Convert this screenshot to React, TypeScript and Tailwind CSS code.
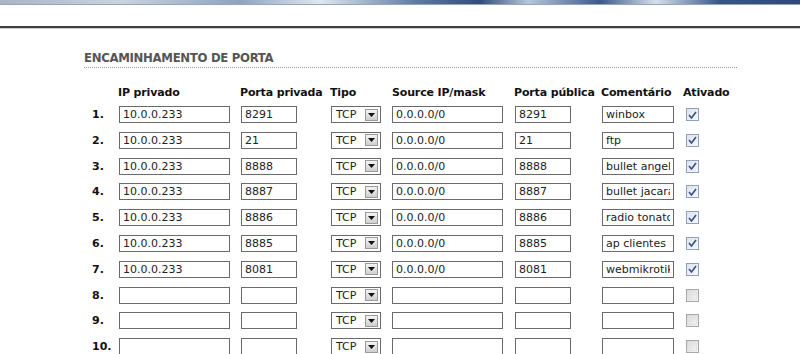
import React from "react";

const rows = [
  ["10.0.0.233", "8291", "0.0.0.0/0", "8291", "winbox", true],
  ["10.0.0.233", "21", "0.0.0.0/0", "21", "ftp", true],
  ["10.0.0.233", "8888", "0.0.0.0/0", "8888", "bullet angelim", true],
  ["10.0.0.233", "8887", "0.0.0.0/0", "8887", "bullet jacarai", true],
  ["10.0.0.233", "8886", "0.0.0.0/0", "8886", "radio tonatoa", true],
  ["10.0.0.233", "8885", "0.0.0.0/0", "8885", "ap clientes", true],
  ["10.0.0.233", "8081", "0.0.0.0/0", "8081", "webmikrotik", true],
  ["", "", "", "", "", false],
  ["", "", "", "", "", false],
  ["", "", "", "", "", false],
] as const;

const font = { fontFamily: '"DejaVu Sans", Verdana, sans-serif' };

function Field({ value, w }: { value: string; w: string }) {
  return (
    <input
      readOnly
      defaultValue={value}
      style={font}
      className={`${w} h-[17px] border border-[#6a6a6a] bg-white px-[3px] text-[11px] leading-[15px] text-[#222] outline-none`}
    />
  );
}

function Select() {
  return (
    <div className="flex h-[17px] w-[50px] items-center justify-between border border-[#6a6a6a] bg-white pl-[4px] pr-[2px]">
      <span style={font} className="text-[11px] leading-[13px] text-[#222]">
        TCP
      </span>
      <div className="flex h-[12px] w-[13px] items-center justify-center border border-[#9a9a9a] bg-gradient-to-b from-[#f4f4f4] to-[#cfcfcf]">
        <svg width="7" height="4" viewBox="0 0 7 4">
          <path d="M0 0h7L3.5 4z" fill="#111" />
        </svg>
      </div>
    </div>
  );
}

function Check({ on }: { on: boolean }) {
  return on ? (
    <div className="flex h-[13px] w-[13px] items-center justify-center border border-[#8ea2bf] bg-gradient-to-br from-[#dde3ee] to-[#f7f8fb]">
      <svg width="9" height="8" viewBox="0 0 9 8">
        <path d="M1 4l2.5 3L8 1" stroke="#3a4f8c" strokeWidth="1.6" fill="none" />
      </svg>
    </div>
  ) : (
    <div className="h-[13px] w-[13px] border border-[#a8a8a8] bg-gradient-to-br from-[#d6d6d6] to-[#f8f8f8] p-[1px]">
      <div className="h-full w-full border border-[#e2e2e2]" />
    </div>
  );
}

export default function App() {
  return (
    <div className="relative h-[354px] w-[800px] overflow-hidden bg-white">
      <div className="h-[4px] bg-[linear-gradient(90deg,#a9b4c4_0%,#c9d3e0_15%,#8ea3c0_30%,#dfe7f1_40%,#5f7ba3_52%,#2f4d7c_60%,#b7c6da_66%,#3a5a8c_75%,#d6e0ec_82%,#355686_90%,#2c4a7a_100%)]" />
      <div className="h-px bg-[#9aa4b2]" />
      <div className="h-[21px]" />
      <div className="h-[2px] bg-[#3e3e3e]" />
      <div className="h-px bg-[#cfcfcf]" />

      <div className="ml-[84px] mt-[21px] w-[653px]">
        <div
          style={{ fontFamily: '"DejaVu Sans Condensed", "Liberation Sans Narrow", sans-serif', fontStretch: "condensed" }}
          className="text-[13px] font-bold leading-[16px] tracking-[-0.3px] text-[#555]"
        >
          ENCAMINHAMENTO DE PORTA
        </div>
        <div className="mt-[1px] border-b border-dotted border-[#9a9a9a]" />
      </div>

      <div className="ml-[92px] mt-[18px]" style={font}>
        <div className="grid h-[20px] grid-cols-[27px_122px_90px_61px_123px_87px_84px_60px] text-[11px] font-bold leading-[13px] tracking-[-0.15px] text-[#111]">
          <div />
          <div className="-ml-px">IP privado</div>
          <div className="-ml-px">Porta privada</div>
          <div className="-ml-px">Tipo</div>
          <div>Source IP/mask</div>
          <div className="-ml-px">Porta pública</div>
          <div className="-ml-px">Comentário</div>
          <div className="-ml-[3px]">Ativado</div>
        </div>
        {rows.map((r, i) => (
          <div
            key={i}
            className="grid h-[25.8px] grid-cols-[27px_122px_90px_61px_123px_87px_84px_60px] items-start"
          >
            <div className="pt-[2px] text-[11px] font-bold leading-[13px] text-[#111]">{i + 1}.</div>
            <Field value={r[0]} w="w-[111px]" />
            <Field value={r[1]} w="w-[56px]" />
            <Select />
            <Field value={r[2]} w="w-[111px]" />
            <Field value={r[3]} w="w-[56px]" />
            <Field value={r[4]} w="w-[72px]" />
            <div className="pt-[2px]">
              <Check on={r[5]} />
            </div>
          </div>
        ))}
      </div>
    </div>
  );
}
